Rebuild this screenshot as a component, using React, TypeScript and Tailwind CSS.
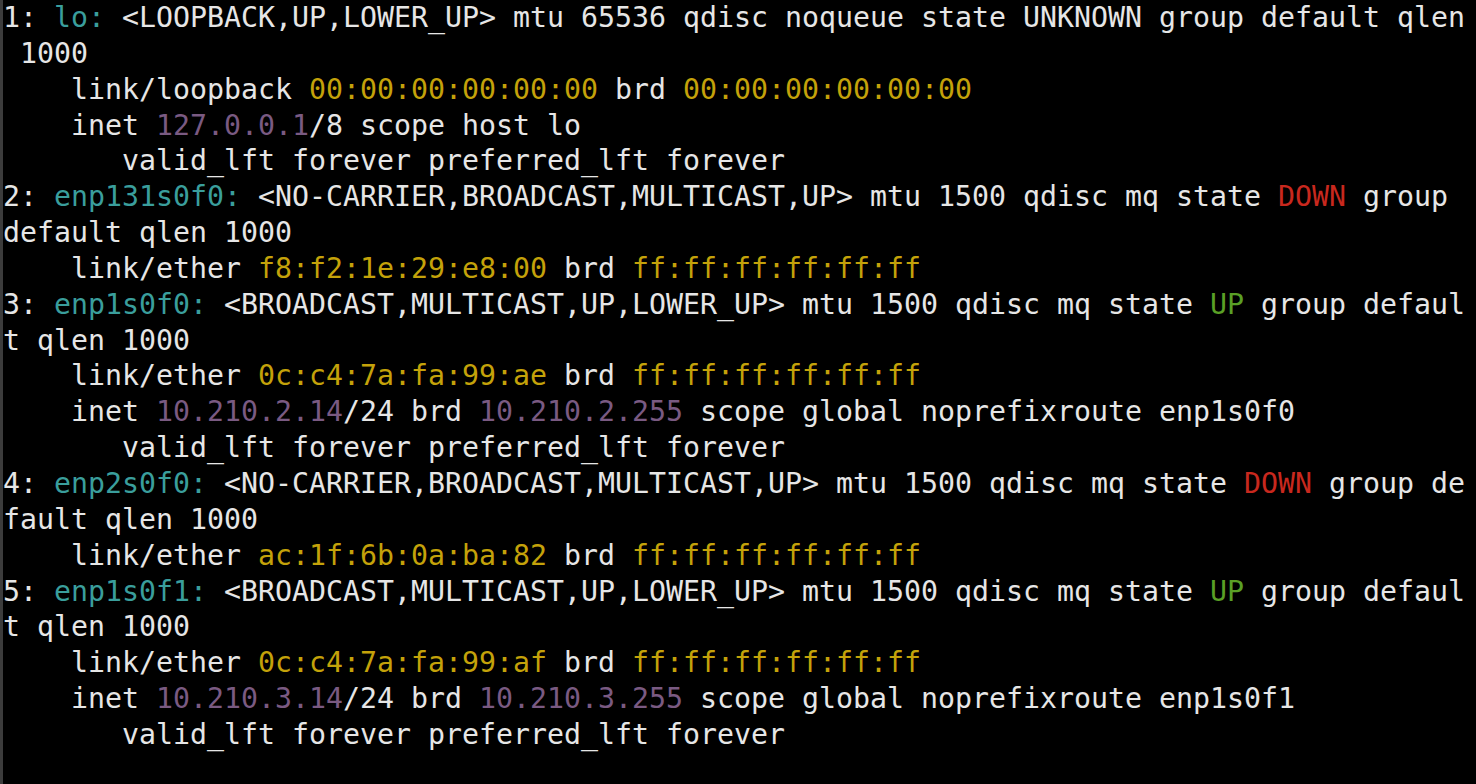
import React from "react";

type Seg = [string, string?];

const C = "text-[#3a9e9c]";
const Y = "text-[#c4a20a]";
const M = "text-[#7a5a82]";
const R = "text-[#c8281e]";
const G = "text-[#5aa026]";

const ether = (mac: string): Seg[] => [
  ["    link/ether "],
  [mac, Y],
  [" brd "],
  ["ff:ff:ff:ff:ff:ff", Y],
];

const valid: Seg[] = [["       valid_lft forever preferred_lft forever"]];

const lines: Seg[][] = [
  [["1: "], ["lo:", C], [" <LOOPBACK,UP,LOWER_UP> mtu 65536 qdisc noqueue state UNKNOWN group default qlen"]],
  [[" 1000"]],
  [["    link/loopback "], ["00:00:00:00:00:00", Y], [" brd "], ["00:00:00:00:00:00", Y]],
  [["    inet "], ["127.0.0.1", M], ["/8 scope host lo"]],
  valid,
  [["2: "], ["enp131s0f0:", C], [" <NO-CARRIER,BROADCAST,MULTICAST,UP> mtu 1500 qdisc mq state "], ["DOWN", R], [" group"]],
  [["default qlen 1000"]],
  ether("f8:f2:1e:29:e8:00"),
  [["3: "], ["enp1s0f0:", C], [" <BROADCAST,MULTICAST,UP,LOWER_UP> mtu 1500 qdisc mq state "], ["UP", G], [" group defaul"]],
  [["t qlen 1000"]],
  ether("0c:c4:7a:fa:99:ae"),
  [["    inet "], ["10.210.2.14", M], ["/24 brd "], ["10.210.2.255", M], [" scope global noprefixroute enp1s0f0"]],
  valid,
  [["4: "], ["enp2s0f0:", C], [" <NO-CARRIER,BROADCAST,MULTICAST,UP> mtu 1500 qdisc mq state "], ["DOWN", R], [" group de"]],
  [["fault qlen 1000"]],
  ether("ac:1f:6b:0a:ba:82"),
  [["5: "], ["enp1s0f1:", C], [" <BROADCAST,MULTICAST,UP,LOWER_UP> mtu 1500 qdisc mq state "], ["UP", G], [" group defaul"]],
  [["t qlen 1000"]],
  ether("0c:c4:7a:fa:99:af"),
  [["    inet "], ["10.210.3.14", M], ["/24 brd "], ["10.210.3.255", M], [" scope global noprefixroute enp1s0f1"]],
  valid,
];

export default function App() {
  return (
    <div className="w-[1476px] h-[784px] bg-black border-l-[3px] border-[#3c3c3c] overflow-hidden">
      <pre className="font-['DejaVu_Sans_Mono',monospace] text-[28.24px] leading-[35.85px] text-[#e6e6e6] whitespace-pre">
        {lines.map((line, i) => (
          <div key={i}>
            {line.map(([t, cls], j) => (
              <span key={j} className={cls}>
                {t}
              </span>
            ))}
          </div>
        ))}
      </pre>
    </div>
  );
}
